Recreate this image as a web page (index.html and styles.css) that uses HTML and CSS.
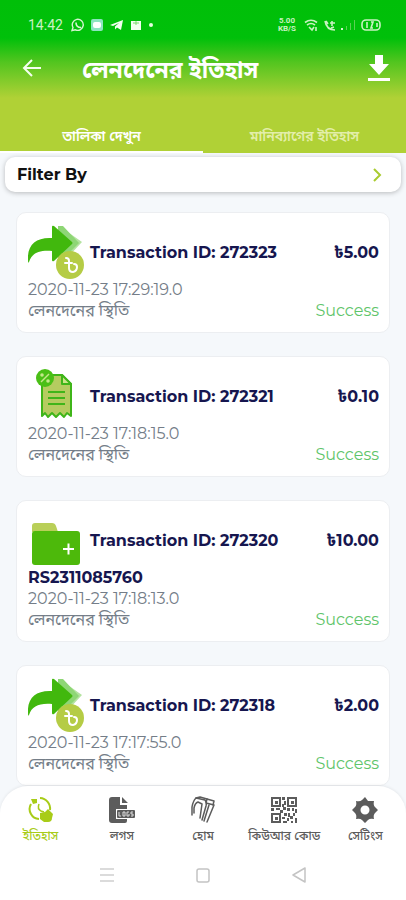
FILE: index.html
```html
<!DOCTYPE html>
<html lang="bn">
<head>
<meta charset="utf-8">
<meta name="viewport" content="width=device-width, initial-scale=1">
<title>লেনদেনের ইতিহাস</title>
<link rel="stylesheet" href="styles.css">
</head>
<body>
<svg class="defs" aria-hidden="true">
  <symbol id="send" viewBox="0 0 56 56">
    <path fill="#b4e3a0" d="M34 4 54 18 40 33 30 32Z"/>
    <path fill="#8ed675" d="M30 2h5l16 17-16 16h-5Z"/>
    <path fill="#41b80d" d="M24 3Q24 1 26 2L44 18Q45 19 44 20L26 37Q24 38 24 36V27C11 26 4 29 1 38Q0 40 0 36C-1 21 8 13 24 14Z"/>
    <circle cx="42" cy="41" r="14" fill="#b5cc45"/>
    <path fill="none" stroke="#fff" stroke-width="2" stroke-linecap="round" d="M38 34q3 0 3 3v7q0 4 4 4 4-1 4-5 0-3-3-3M37 39h7"/>
  </symbol>
  <symbol id="receipt" viewBox="0 0 56 56">
    <path fill="#b5cc60" stroke="#3fb519" stroke-width="2" stroke-linejoin="round" d="M14 7H34L43 16V48L39 45 36 49 32 45 28 49 24 45 20 49 17 45 14 48Z"/>
    <path fill="#cde58a" stroke="#3fb519" stroke-width="2" stroke-linejoin="round" d="M34 7V16H43Z"/>
    <path stroke="#3fb519" stroke-width="2" d="M20 24H37M20 30H37M20 36H37"/>
    <circle cx="17" cy="10" r="9" fill="#4abf16"/>
    <path fill="none" stroke="#c5e88a" stroke-width="1.5" d="M13 14 21 6"/>
    <circle cx="14" cy="7" r="1.8" fill="#c5e88a"/><circle cx="20" cy="13" r="1.8" fill="#c5e88a"/>
  </symbol>
  <symbol id="folder" viewBox="0 0 56 56">
    <path fill="#b9cf58" d="M4 20V14q0-3 3-3H24q3 0 4 3l2 6Z"/>
    <rect x="4" y="19" width="48" height="34" rx="3" fill="#4db90b"/>
    <path stroke="#fff" stroke-width="2" d="M35 37H46M40.500 31.500V42.500"/>
  </symbol>
</svg>

<header class="header">
  <div class="status">
    <span class="clock">14:42</span>
    <svg width="84" height="14" viewBox="0 0 84 14" aria-hidden="true">
      <path fill="none" stroke="#d5f5d0" stroke-width="1.4" d="M1 12.500 2 9.500A5.500 5.500 0 1 1 4.500 11.800Z"/>
      <path fill="none" stroke="#d5f5d0" stroke-width="1.600" d="M5 4.500C5 7.500 7 9.500 10 9.500"/>
      <rect x="20" y="1" width="12" height="12" rx="2" fill="#8ce5c0"/><rect x="22" y="4" width="8" height="6" rx="2" fill="#fff"/>
      <path fill="#f2fff0" d="M39 7 52 2 50 12 46 9.500 44 11.500V8.500L48 5 42 8Z"/>
      <path fill="#f2fff0" d="M60 3H70V12H60Z"/><path stroke="#7bd96f" d="M65 3V7M62 5H68"/>
      <circle cx="80" cy="7" r="2" fill="#e5ffe0"/>
    </svg>
    <span class="rate">5.00<br>KB/S</span>
    <svg width="78" height="14" viewBox="0 0 78 14" aria-hidden="true">
      <g fill="none" stroke="#c9f2c2" stroke-width="1.6">
        <path d="M1 4.500Q7 0 13 4.500M3 7Q7 4 11 7"/><path d="M5 9 8 12 10 9M12 9V13"/>
        <path d="M21 3C22 9 25 12 31 12M22 3 24 6M27 10 30 9M26 5H31M28 3V8"/>
        <rect x="58" y="2" width="18" height="10" rx="4"/><path d="M63 4V10M67 4H69L67 10H69M73 5V9"/>
      </g>
      <path fill="#d5f5d0" d="M37 10h2v2h-2Z"/><path fill="#5cd054" d="M42 8h1v4h-1ZM46 5h1v7h-1ZM50 2h1v10h-1Z"/>
    </svg>
  </div>
  <div class="bar">
    <button class="icon-btn" aria-label="Back"><svg width="20" height="20" viewBox="0 0 20 20"><path fill="none" stroke="#f5fff0" stroke-width="2" d="M19 10H2M10 2 2 10 10 18"/></svg></button>
    <h1>লেনদেনের ইতিহাস</h1>
    <button class="icon-btn" aria-label="Download"><svg width="24" height="28" viewBox="0 0 24 28"><path fill="#fff" d="M8 1H16V10H22L12 21 2 10H8ZM1 24H23V27H1Z"/></svg></button>
  </div>
  <nav class="tabs">
    <a class="tab active" href="#list">তালিকা দেখুন</a>
    <a class="tab" href="#bag">মানিব্যাগের ইতিহাস</a>
  </nav>
</header>

<button class="filter">Filter By
  <svg width="10" height="14" viewBox="0 0 10 14" aria-hidden="true"><path fill="none" stroke="#a9cb30" stroke-width="2" d="M2 1 8 7 2 13"/></svg>
</button>

<main class="list" id="list">
  <article class="card">
    <div class="top"><svg class="pic" aria-hidden="true"><use href="#send"/></svg><h2>Transaction ID: 272323</h2><strong>৳5.00</strong></div>
    <p>2020-11-23 17:29:19.0</p>
    <div class="row"><span>লেনদেনের স্থিতি</span><span class="ok">Success</span></div>
  </article>
  <article class="card">
    <div class="top"><svg class="pic" aria-hidden="true"><use href="#receipt"/></svg><h2>Transaction ID: 272321</h2><strong>৳0.10</strong></div>
    <p>2020-11-23 17:18:15.0</p>
    <div class="row"><span>লেনদেনের স্থিতি</span><span class="ok">Success</span></div>
  </article>
  <article class="card">
    <div class="top"><svg class="pic" aria-hidden="true"><use href="#folder"/></svg><h2>Transaction ID: 272320</h2><strong>৳10.00</strong></div>
    <p class="ref">RS2311085760</p>
    <p>2020-11-23 17:18:13.0</p>
    <div class="row"><span>লেনদেনের স্থিতি</span><span class="ok">Success</span></div>
  </article>
  <article class="card">
    <div class="top"><svg class="pic" aria-hidden="true"><use href="#send"/></svg><h2>Transaction ID: 272318</h2><strong>৳2.00</strong></div>
    <p>2020-11-23 17:17:55.0</p>
    <div class="row"><span>লেনদেনের স্থিতি</span><span class="ok">Success</span></div>
  </article>
</main>

<footer class="footer">
  <nav class="nav">
    <a class="active" href="#history">
      <svg viewBox="0 0 28 28" aria-hidden="true"><g fill="none" stroke="currentColor" stroke-width="2"><path d="M4 8A10 10 0 0 0 12 23M13 2A10.500 10.500 0 0 1 23 14"/><path d="M12 8Q10 13 14 15L17 16" stroke-width="1.500"/></g><path fill="currentColor" d="M4 3H10V7L6 8Z"/><path fill="currentColor" d="M13 17l5-1 3-3 5 5-1 4q0 4-4 4h-4l-4-3Z"/></svg>
      <span>ইতিহাস</span></a>
    <a href="#logs">
      <svg viewBox="0 0 28 28" aria-hidden="true"><path fill="currentColor" d="M4 1H12V9H19V13H8V23H19V25Q19 27 17 27H4Q1 27 1 24V4Q1 1 4 1ZM14 1 20 7H14Z"/><rect x="9" y="14" width="18" height="8" rx="1" fill="currentColor"/><path fill="none" stroke="#ddd" d="M11 16V20H13M15 16H17V20H15ZM21 16H19V20H21V18M25 16H23V18H25V20H23"/></svg>
      <span>লগস</span></a>
    <a href="#home">
      <svg viewBox="0 0 28 28" aria-hidden="true"><g fill="none" stroke="currentColor" stroke-width="1.500" stroke-linejoin="round" stroke-linecap="round"><path d="M3 19V11Q4 5 7 2L16 4Q18 6 17 10L13 24"/><path d="M5 17V12Q6 7 9 6L13 8 11 22"/><path d="M7 2 11 1 18 3 17 7 25 9 18 26"/><path d="M18 3 25 5 24 9M20 9 15 25"/></g></svg>
      <span>হোম</span></a>
    <a href="#qr">
      <svg viewBox="0 0 28 28" aria-hidden="true"><g fill="none" stroke="currentColor" stroke-width="2"><rect x="2" y="2" width="8" height="8"/><rect x="18" y="2" width="8" height="8"/><rect x="2" y="18" width="8" height="8"/></g><path fill="currentColor" d="M5 5h3v3H5ZM21 5h3v3h-3ZM5 21h3v3H5ZM12 1h3v3h-3ZM14 5h2v4h-2ZM12 8h2v3h-2ZM1 12h3v3H1ZM6 12h4v2H6ZM10 14h3v3h-3ZM13 11h3v3h-3ZM17 12h3v3h-3ZM22 12h2v3h-2ZM25 13h2v4h-2ZM14 17h3v3h-3ZM12 21h3v2h-3ZM13 25h4v2h-4ZM18 17h2v4h-2ZM20 20h3v3h-3ZM23 17h2v3h-2ZM17 22h2v3h-2ZM21 25h2v2h-2ZM25 22h2v5h-2Z"/></svg>
      <span>কিউআর কোড</span></a>
    <a href="#settings">
      <svg viewBox="0 0 28 28" aria-hidden="true"><path fill="currentColor" fill-rule="evenodd" d="M14 1 17 5Q19 5 23 5Q22 9 24 11L27 14 24 17Q22 19 23 23Q19 22 17 24L14 27 11 24Q9 22 5 23Q6 19 4 17L1 14 4 11Q6 9 5 5Q9 6 11 4ZM14 9.500A4.500 4.500 0 1 0 14 18.500A4.500 4.500 0 1 0 14 9.500Z"/></svg>
      <span>সেটিংস</span></a>
  </nav>
  <div class="system">
    <button aria-label="Recent apps"><svg width="16" height="16" viewBox="0 0 16 16"><path stroke="#d0d0d0" stroke-width="1.500" d="M1 2H15M1 8H15M1 14H15"/></svg></button>
    <button aria-label="Home screen"><svg width="16" height="16" viewBox="0 0 16 16"><rect x="2" y="2" width="12" height="13" rx="2" fill="none" stroke="#c4c4c4" stroke-width="1.500"/></svg></button>
    <button aria-label="System back"><svg width="16" height="16" viewBox="0 0 16 16"><path fill="none" stroke="#c4c4c4" stroke-width="1.500" stroke-linejoin="round" d="M14 1V15L2 8Z"/></svg></button>
  </div>
</footer>
</body>
</html>
```
FILE: styles.css
```css
* { box-sizing: border-box; }
body {
  margin: 0;
  height: 100vh;
  display: flex;
  flex-direction: column;
  background: #f5f8fb;
  color: #747d88;
  font-family: Montserrat, Inter, "Noto Sans Bengali", "Noto Sans", sans-serif;
  font-size: 16px;
}
button { border: 0; padding: 0; background: none; font: inherit; cursor: pointer; }
a { color: inherit; text-decoration: none; }
svg { display: block; }
h1, h2, p { margin: 0; }
.defs { display: none; }

.header {
  flex: none;
  background: linear-gradient(#00bf08 0, #00c00a 38px, #52c51f 62px, #b0d136 98px, #b0d136);
  color: #fff;
}
.status {
  display: flex;
  align-items: center;
  height: 44px;
  padding: 6px 24px 0 28px;
  color: #c9f2c2;
}
.clock { font: 14px Roboto, sans-serif; margin-right: 8px; }
.rate {
  margin-left: auto;
  margin-right: 8px;
  font: bold 8px/8px Roboto, sans-serif;
  text-align: center;
}
.bar { display: flex; align-items: center; height: 48px; padding: 0 15px 0 22px; }
.bar h1 { flex: 1; margin-left: 36px; padding-top: 4px; font-size: 23px; line-height: 32px; font-weight: 700; }
.icon-btn { min-width: 24px; }
.tabs { display: flex; padding-top: 24px; }
.tab {
  flex: 1;
  height: 37px;
  padding-top: 8px;
  text-align: center;
  font-size: 14px;
  line-height: 24px;
  font-weight: 600;
  color: #e3eeaa;
  border-bottom: 2px solid transparent;
}
.tab.active { color: #fff; border-color: #fff; }

.filter {
  flex: none;
  display: flex;
  justify-content: space-between;
  align-items: center;
  height: 35px;
  margin: 4px 5px 0;
  padding: 0 19px 0 12px;
  border-radius: 10px;
  background: #fff;
  box-shadow: 0 1px 5px #00000040;
  color: #111;
  font-weight: 700;
}

.list {
  flex: 1;
  min-height: 0;
  overflow: auto;
  scrollbar-width: none;
  display: flex;
  flex-direction: column;
  gap: 23px;
  padding: 20px 16px 0;
}
.card {
  flex: none;
  padding: 12px 10px 11px 11px;
  border: 1px solid #eceef1;
  border-radius: 10px;
  background: #fff;
  line-height: 21px;
}
.top { display: flex; align-items: center; height: 54px; color: #16164f; }
.pic { flex: none; width: 56px; height: 56px; }
.top h2 { flex: 1; margin-left: 6px; font-size: 16px; font-weight: 700; white-space: nowrap; }
.top strong { font-weight: 700; }
.card .ref { color: #16164f; font-weight: 700; }
.row { display: flex; justify-content: space-between; }
.row .ok { color: #5fc56b; }

.footer { flex: none; background: #fff; border-radius: 28px 28px 0 0; box-shadow: 0 -1px 3px #00000010; }
.nav { display: flex; padding: 10px 0 0; height: 63px; }
.nav a {
  flex: 1;
  display: flex;
  flex-direction: column;
  align-items: center;
  gap: 3px;
  font-size: 12px;
  line-height: 18px;
  font-weight: 500;
  color: #5c5c5c;
  white-space: nowrap;
}
.nav svg { width: 28px; height: 28px; }
.nav a.active { color: #a8cc18; }
.system { display: flex; justify-content: center; gap: 80px; height: 51px; }
```
